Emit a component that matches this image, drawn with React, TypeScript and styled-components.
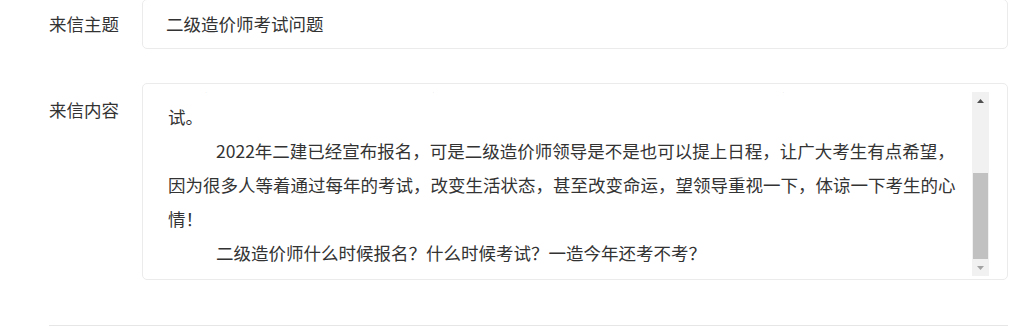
import { useEffect, useRef, useState } from "react";
import styled, { createGlobalStyle } from "styled-components";

const GlobalStyle = createGlobalStyle`
  html, body {
    margin: 0;
    padding: 0;
    background: #fff;
  }
  body {
    font-family: "Noto Sans CJK SC", "Noto Sans", sans-serif;
    color: #333;
  }
`;

const Form = styled.div`
  padding: 0 10px 0 49px;
  margin-top: -1px;
  font-size: 17.5px;
`;

const Row = styled.div<{ $gap?: number }>`
  display: flex;
  align-items: flex-start;
  margin-top: ${(p) => p.$gap ?? 0}px;
`;

const Label = styled.div<{ $top?: number; $lh: number }>`
  width: 93px;
  flex-shrink: 0;
  padding-top: ${(p) => p.$top ?? 0}px;
  line-height: ${(p) => p.$lh}px;
  color: #333;
  white-space: nowrap;
`;

const InputBox = styled.div`
  flex: 1;
  height: 50px;
  box-sizing: border-box;
  border: 1px solid #ebebeb;
  border-radius: 5px;
  padding-left: 23px;
  line-height: 48px;
  color: #333;
`;

const TextBox = styled.div`
  flex: 1;
  height: 197px;
  box-sizing: border-box;
  border: 1px solid #ebebeb;
  border-radius: 5px;
  padding: 8px 18px 3px 25px;
  display: flex;
`;

const Scroller = styled.div`
  flex: 1;
  min-width: 0;
  height: 184px;
  overflow: hidden;
  padding-right: 9px;
`;

const Content = styled.div`
  padding: 8px 0 6px;
  line-height: 34px;
  color: #333;
`;

const Para = styled.p`
  margin: 0;
  text-indent: 48px;
`;

const ScrollBar = styled.div`
  width: 17px;
  height: 184px;
  flex-shrink: 0;
  background: #f1f1f1;
  display: flex;
  flex-direction: column;
`;

const ArrowButton = styled.div`
  height: 17px;
  display: flex;
  align-items: center;
  justify-content: center;
`;

const Track = styled.div`
  flex: 1;
  display: flex;
  flex-direction: column;
  justify-content: flex-end;
`;

const Thumb = styled.div`
  margin: 0 1px;
  background: #c1c1c1;
`;

const Divider = styled.div`
  height: 1px;
  background: #e6e6e6;
  margin-top: 45px;
`;

const paragraphs = [
  "您好！我是一名准备参加二级造价师考试的考生，去年因为疫情的原因，省里的二级造价师考试一直没有举行，好不容易等到了今年，我们每天下班以后都在坚持复习，可是到现在为止，省里的相关部门仍然没有发布任何关于二级造价师报名和考试的通知，周边很多省份都已经公布了报名时间和考试安排，我们这些考生心里非常着急，不知道今年到底还能不能顺利报名参加考试，恳请领导尽快安排考试。",
  "2022年二建已经宣布报名，可是二级造价师领导是不是也可以提上日程，让广大考生有点希望，因为很多人等着通过每年的考试，改变生活状态，甚至改变命运，望领导重视一下，体谅一下考生的心情！",
  "二级造价师什么时候报名？什么时候考试？一造今年还考不考？",
];

export default function App() {
  const scrollRef = useRef<HTMLDivElement>(null);
  const [thumb, setThumb] = useState(87);

  useEffect(() => {
    const el = scrollRef.current;
    if (!el) return;
    el.scrollTop = el.scrollHeight;
    setThumb(Math.round((150 * el.clientHeight) / el.scrollHeight));
  }, []);

  return (
    <>
      <GlobalStyle />
      <Form>
        <Row>
          <Label $lh={50}>来信主题</Label>
          <InputBox>二级造价师考试问题</InputBox>
        </Row>
        <Row $gap={34}>
          <Label $lh={34} $top={10}>
            来信内容
          </Label>
          <TextBox>
            <Scroller ref={scrollRef}>
              <Content>
                {paragraphs.map((t, i) => (
                  <Para key={i}>{t}</Para>
                ))}
              </Content>
            </Scroller>
            <ScrollBar>
              <ArrowButton>
                <svg width="7" height="4" viewBox="0 0 7 4">
                  <path d="M3.5 0L7 4H0z" fill="#505050" />
                </svg>
              </ArrowButton>
              <Track>
                <Thumb style={{ height: thumb }} />
              </Track>
              <ArrowButton>
                <svg width="7" height="4" viewBox="0 0 7 4">
                  <path d="M0 0H7L3.5 4z" fill="#a3a3a3" />
                </svg>
              </ArrowButton>
            </ScrollBar>
          </TextBox>
        </Row>
        <Divider />
      </Form>
    </>
  );
}
